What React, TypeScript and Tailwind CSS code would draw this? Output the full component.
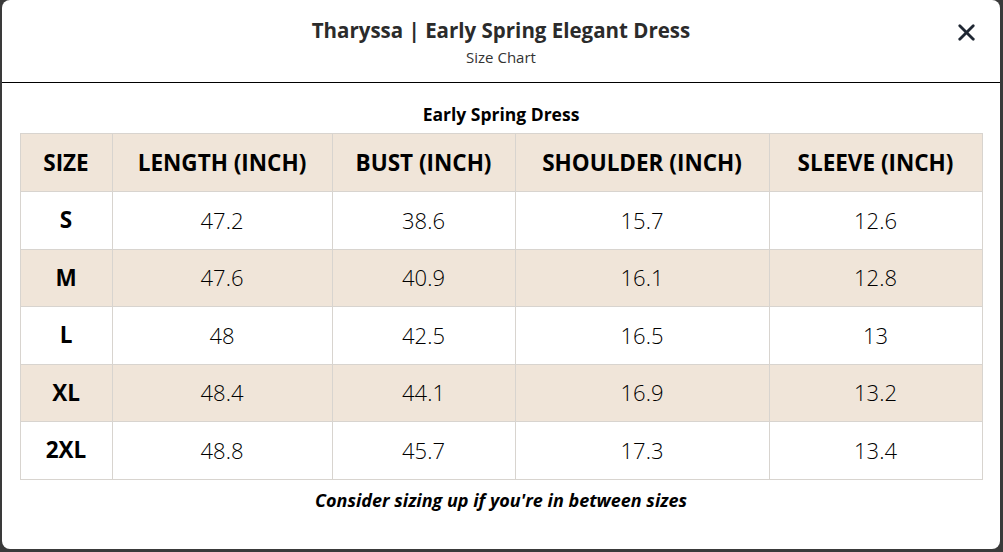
import { X } from "lucide-react";

const rows = [
  ["S", "47.2", "38.6", "15.7", "12.6"],
  ["M", "47.6", "40.9", "16.1", "12.8"],
  ["L", "48", "42.5", "16.5", "13"],
  ["XL", "48.4", "44.1", "16.9", "13.2"],
  ["2XL", "48.8", "45.7", "17.3", "13.4"],
];

const heads = ["SIZE", "LENGTH (INCH)", "BUST (INCH)", "SHOULDER (INCH)", "SLEEVE (INCH)"];
const widths = ["w-[92px]", "w-[220px]", "w-[183px]", "w-[254px]", "w-[213px]"];

export default function App() {
  return (
    <div className="w-[1003px] h-[552px] bg-[#3a3a3a] pl-[2px] pr-[3px] pb-[3px] font-['Open_Sans',sans-serif]">
      <div className="h-full bg-white rounded-lg flex flex-col">
        <div className="relative h-[83px] border-b border-black flex flex-col items-center pt-[16px]">
          <h1 className="text-[20.5px] font-bold text-[#2b2b2b] leading-[28px]">Tharyssa | Early Spring Elegant Dress</h1>
          <p className="text-[15px] text-[#333] leading-[20px] mt-[3px]">Size Chart</p>
          <button className="absolute right-[20px] top-[19px] text-[#1f2733]">
            <X size={27} strokeWidth={2.5} />
          </button>
        </div>
        <div className="px-[19px] pt-[19px] flex flex-col items-center">
          <h2 className="text-[17.5px] font-bold text-black leading-[25px]">Early Spring Dress</h2>
          <table className="mt-[6px] border-collapse w-[962px] table-fixed">
            <thead>
              <tr className="bg-[#f0e5d9] h-[58px]">
                {heads.map((h, i) => (
                  <th key={h} className={`${widths[i]} border border-[#d8d4cf] text-[22.5px] font-bold text-black`}>{h}</th>
                ))}
              </tr>
            </thead>
            <tbody>
              {rows.map((r, ri) => (
                <tr key={r[0]} className={`h-[57.5px] ${ri % 2 === 1 ? "bg-[#f0e5d9]" : "bg-white"}`}>
                  {r.map((c, ci) => (
                    <td
                      key={ci}
                      className={`border border-[#d8d4cf] text-center text-black ${ci === 0 ? "text-[22.5px] font-bold" : "text-[22px] font-light"}`}
                    >
                      {c}
                    </td>
                  ))}
                </tr>
              ))}
            </tbody>
          </table>
          <p className="mt-[7px] text-[18px] font-bold italic text-black leading-[26px]">Consider sizing up if you're in between sizes</p>
        </div>
      </div>
    </div>
  );
}
